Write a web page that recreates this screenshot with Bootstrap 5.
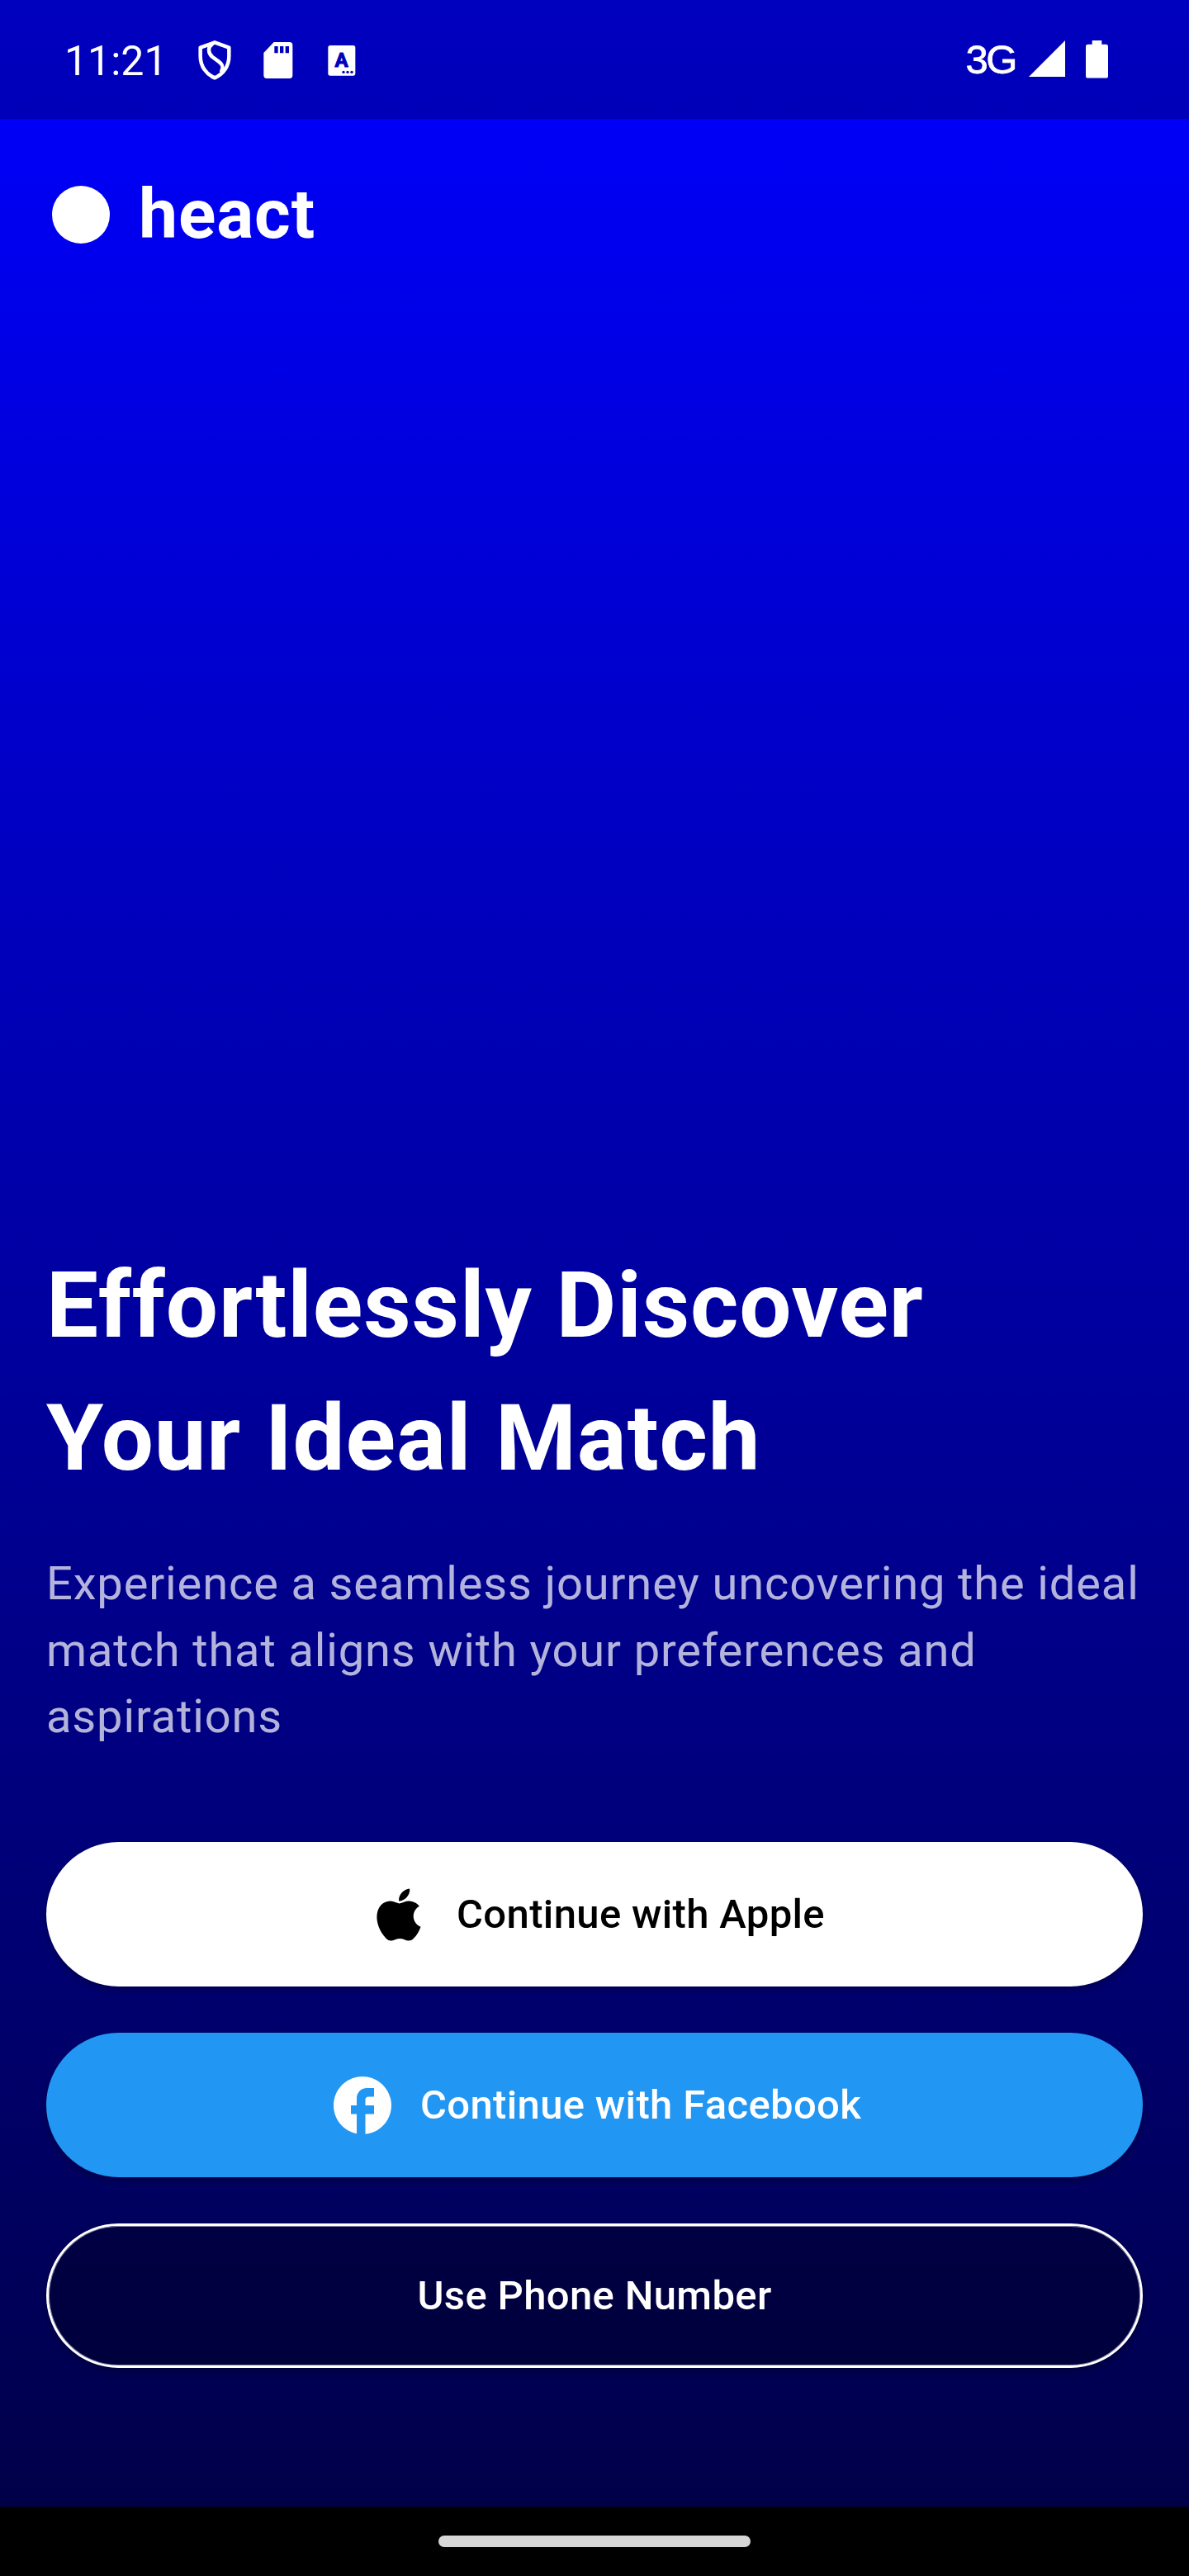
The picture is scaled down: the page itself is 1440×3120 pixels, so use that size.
<!DOCTYPE html>
<html lang="en">
<head>
<meta charset="utf-8">
<meta name="viewport" content="width=device-width, initial-scale=1">
<title>heact</title>
<link href="https://cdn.jsdelivr.net/npm/bootstrap@5.3.0/dist/css/bootstrap.min.css" rel="stylesheet">
<script src="https://cdn.jsdelivr.net/npm/bootstrap@5.3.0/dist/js/bootstrap.bundle.min.js" defer></script>
<style>
body{font-family:Roboto,sans-serif;background:#000}
.screen{width:1440px;height:3120px}
.app{background:linear-gradient(#00f,#000049)}
.status-bar{height:144px;padding:0 98px 0 78px;background:rgba(0,0,0,.25)}
.clock{width:158px;font-size:50px;line-height:1;padding-top:4px}
.tray{gap:29px}
.network{font-family:"Liberation Sans",sans-serif;font-size:49px;line-height:1;letter-spacing:-2.4px;-webkit-text-stroke:.8px #fff;padding-top:1px}
.battery{margin-left:25px}
.content{padding:0 56px 168px}
.brand{height:112px;margin-top:60px;gap:35px;padding-left:7px}
.brand-dot{width:70px;height:70px}
.brand-name{font-size:84px;line-height:1;letter-spacing:.875px}
.headline{font-size:112px;line-height:161px;letter-spacing:.875px}
.intro{font-size:56px;line-height:80.5px;letter-spacing:.875px;color:rgba(255,255,255,.7);margin-top:56px;margin-bottom:111.5px;white-space:nowrap}
.actions{gap:56px}
.btn-pill{height:175px;font-size:49px;line-height:1;font-weight:500;letter-spacing:.35px;gap:28px;box-shadow:0 4px 9px rgba(0,0,0,.28)}
.btn-apple,.btn-apple:hover{background:#fff;color:#000}
.btn-facebook,.btn-facebook:hover{background:#2196f3;color:#fff}
.btn-phone,.btn-phone:hover{background:rgba(0,0,0,.27);color:#fff;border:3px solid #fff;box-shadow:inset 0 0 0 1px rgba(255,255,255,.5),0 4px 9px rgba(0,0,0,.28)}
.home-bar{height:84px}
.home-handle{width:378px;height:14px;background:#d6d6d6}
</style>
</head>
<body>
<div class="screen d-flex flex-column text-white overflow-hidden">
  <main class="app d-flex flex-column flex-grow-1">
    <header class="status-bar d-flex align-items-center justify-content-between">
      <div class="d-flex align-items-center">
        <span class="clock">11:21</span>
        <div class="tray d-flex">
          <svg width="48" height="64" viewBox="17 0 144 192" fill="none" stroke="#fff" stroke-width="13.5" stroke-linejoin="round" stroke-linecap="round">
            <path d="M89 34 141 53V84C141 122 119 150 89 163 59 150 37 122 37 84V53Z"/>
            <path d="M80 40C63 52 65 74 81 87L103 103C119 115 121 124 114 138"/>
          </svg>
          <svg width="48" height="64" viewBox="248 0 144 192" fill="#fff">
            <path fill-rule="evenodd" d="M304 33H361Q372 33 372 44V154Q372 165 361 165H278Q267 165 267 154V72ZM306 48V73H319V48ZM326 48V73H339V48ZM346 48V73H359V48Z"/>
          </svg>
          <svg width="48" height="64" viewBox="479 0 144 192">
            <rect x="501" y="45" width="99" height="110" rx="8" fill="#fff"/>
            <text x="550" y="124" text-anchor="middle" font-family="Roboto, sans-serif" font-weight="700" font-size="72" fill="#0000ba" stroke="#0000ba" stroke-width="3" stroke-linejoin="round">A</text>
            <g fill="#0000ba"><circle cx="557" cy="142" r="5"/><circle cx="572" cy="142" r="5"/><circle cx="587" cy="142" r="5"/></g>
          </svg>
        </div>
      </div>
      <div class="d-flex align-items-center">
        <span class="network">3G</span>
        <svg class="ms-3" width="44" height="46" viewBox="0 0 44 46" fill="#fff"><path d="M44 0V44H0Z"/></svg>
        <svg class="battery" width="27" height="46" viewBox="0 0 27 46" fill="#fff"><path d="M7.700 0H19.300V4.800H24.500Q27 4.800 27 7.300V43Q27 45.600 24.500 45.600H2.500Q0 45.600 0 43V7.300Q0 4.800 2.500 4.800H7.700Z"/></svg>
      </div>
    </header>
    <div class="content d-flex flex-column flex-grow-1">
      <div class="brand d-flex align-items-center">
        <span class="brand-dot rounded-circle bg-white"></span>
        <span class="brand-name fw-bold">heact</span>
      </div>
      <h1 class="headline fw-bold mt-auto mb-0">Effortlessly Discover<br>Your Ideal Match</h1>
      <p class="intro">Experience a seamless journey uncovering the ideal<br>match that aligns with your preferences and<br>aspirations</p>
      <div class="actions d-flex flex-column">
        <button type="button" class="btn btn-pill btn-apple rounded-pill border-0 d-flex align-items-center justify-content-center">
          <svg width="84" height="84" viewBox="0 0 24 24" fill="currentColor"><path d="M17.050 20.280C16.070 21.230 15 21.080 13.970 20.630 12.880 20.170 11.880 20.150 10.730 20.630 9.290 21.250 8.530 21.070 7.670 20.280 2.790 15.250 3.510 7.590 9.050 7.310 10.400 7.380 11.340 8.050 12.130 8.110 13.310 7.870 14.440 7.180 15.700 7.270 17.210 7.390 18.350 7.990 19.100 9.070 15.980 10.940 16.720 15.050 19.580 16.200 19.010 17.700 18.270 19.190 17.040 20.290ZM12.030 7.250C11.880 5.020 13.690 3.180 15.770 3 16.060 5.580 13.430 7.500 12.030 7.250Z"/></svg>
          <span>Continue with Apple</span>
        </button>
        <button type="button" class="btn btn-pill btn-facebook rounded-pill border-0 d-flex align-items-center justify-content-center">
          <svg width="84" height="84" viewBox="0 0 24 24" fill="currentColor"><path d="M22 12c0-5.520-4.480-10-10-10S2 6.480 2 12c0 4.840 3.440 8.870 8 9.800V15H8v-3h2V9.500C10 7.570 11.570 6 13.500 6H16v3h-2c-.55 0-1 .45-1 1v2h3v3h-3v6.950c5.050-.5 9-4.760 9-9.950z"/></svg>
          <span>Continue with Facebook</span>
        </button>
        <button type="button" class="btn btn-pill btn-phone rounded-pill d-flex align-items-center justify-content-center">Use Phone Number</button>
      </div>
    </div>
  </main>
  <footer class="home-bar bg-black d-flex align-items-center justify-content-center">
    <span class="home-handle rounded-pill"></span>
  </footer>
</div>
</body>
</html>
